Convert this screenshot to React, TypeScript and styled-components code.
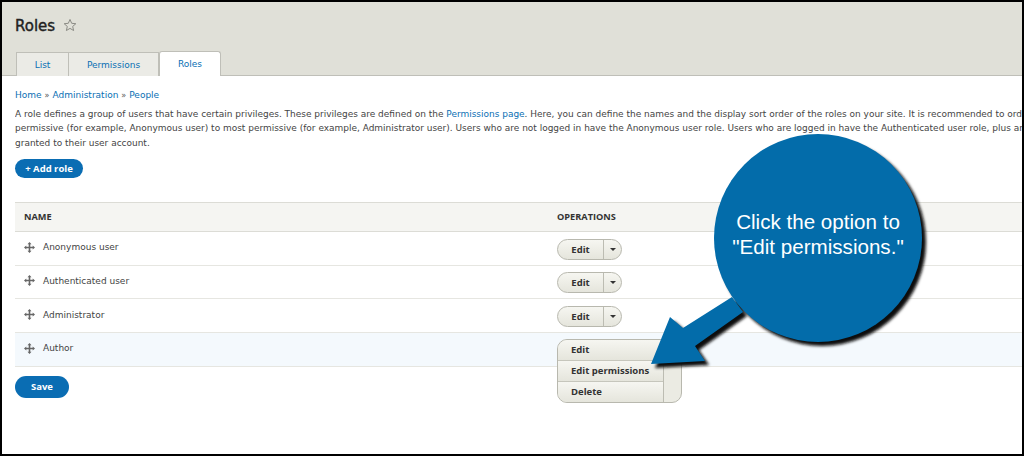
import React from "react";
import styled, { createGlobalStyle } from "styled-components";

const Global = createGlobalStyle`
  html, body { margin: 0; padding: 0; background: #fff; }
  body { font-family: "DejaVu Sans", sans-serif; }
  * { box-sizing: border-box; }
`;

const boldFont = `"Open Sans", "DejaVu Sans", sans-serif`;

const Frame = styled.div`
  position: relative;
  width: 1024px;
  height: 456px;
  overflow: hidden;
  background: #fff;
  border-style: solid;
  border-color: #000;
  border-width: 2px;
  color: #444;
`;

const Header = styled.header`
  height: 74px;
  background: #e0e0d8;
  border-bottom: 1px solid #bfbfb8;
  padding: 14px 0 0 13px;
  display: flex;
  flex-direction: column;
`;

const TitleRow = styled.div`
  display: flex;
  align-items: center;
  gap: 8px;
  height: 20px;
`;

const Title = styled.h1`
  margin: 0;
  font-size: 15px;
  line-height: 20px;
  font-weight: 400;
  color: #222;
  -webkit-text-stroke: 0.4px #222;
`;

const StarIcon = styled.svg`
  margin-top: -2px;
`;

const Tabs = styled.nav`
  display: flex;
  margin-top: 15px;
  margin-left: 1px;
  height: 25px;
`;

const Tab = styled.a<{ $active?: boolean; $first?: boolean; $width: number }>`
  display: flex;
  align-items: center;
  justify-content: center;
  width: ${(p) => p.$width}px;
  height: ${(p) => (p.$active ? 25 : 24)}px;
  margin-top: ${(p) => (p.$active ? 0 : 1)}px;
  font-size: 9px;
  color: #0a6fb4;
  background: ${(p) => (p.$active ? "#fff" : "#ebebe6")};
  border: 1px solid #bfbfb8;
  border-bottom: none;
  border-left-width: ${(p) => (p.$first || p.$active ? 1 : 0)}px;
  border-radius: ${(p) => (p.$active ? "3px 3px 0 0" : "0")};
`;

const Content = styled.main`
  padding: 13px 0 0 13px;
`;

const Crumbs = styled.div`
  font-size: 9px;
  line-height: 13px;
  color: #0a6fb4;
  & span { font-size: 8px; color: #555; margin: 0 3px; }
`;

const Intro = styled.div`
  margin-top: 5px;
  width: 1009px;
  overflow: hidden;
`;

const IntroLine = styled.p`
  margin: 0;
  font-size: 8.98px;
  line-height: 14.3px;
  white-space: nowrap;
  color: #444;
  & a { color: #0a6fb4; }
`;

const PrimaryButton = styled.button<{ $width: number; $height: number }>`
  display: block;
  width: ${(p) => p.$width}px;
  height: ${(p) => p.$height}px;
  border: none;
  border-radius: 12px;
  background: #0a6db3;
  color: #fff;
  font-family: ${boldFont};
  font-size: 9.5px;
  font-weight: 700;
  padding: 0;
`;

const AddWrap = styled.div`
  margin-top: 9px;
`;

const Table = styled.div`
  margin-top: 24px;
  width: 1009px;
`;

const HeadRow = styled.div`
  display: grid;
  grid-template-columns: 533px 1fr;
  align-items: center;
  height: 30px;
  background: #f5f5f2;
  border-top: 1px solid #dcdcd6;
  border-bottom: 1px solid #dcdcd6;
  padding-left: 9px;
  font-family: ${boldFont};
  font-size: 9.2px;
  font-weight: 700;
  color: #333;
`;

const Row = styled.div<{ $highlight?: boolean }>`
  position: relative;
  display: grid;
  grid-template-columns: 533px 1fr;
  align-items: center;
  height: 33.7px;
  padding-left: 9px;
  background: ${(p) => (p.$highlight ? "#f4f9fd" : "#fff")};
  border-bottom: 1px solid #e6e6e1;
`;

const NameCell = styled.div`
  display: flex;
  align-items: center;
  gap: 8px;
  font-size: 9px;
  color: #444;
  transform: translateY(-1px);
`;

const Operations = styled.div`
  display: flex;
  width: 65px;
  height: 21px;
  border: 1px solid #b8b8ae;
  border-radius: 11px;
  overflow: hidden;
  background: linear-gradient(#f6f6f1, #e5e5dc);
  transform: translateY(1px);
`;

const OpMain = styled.div`
  display: flex;
  align-items: center;
  justify-content: center;
  width: 46px;
  font-family: ${boldFont};
  font-size: 9.5px;
  font-weight: 700;
  color: #333;
  border-right: 1px solid #bcbcb2;
`;

const OpToggle = styled.div`
  flex: 1;
  display: flex;
  align-items: center;
  justify-content: center;
  &::after {
    content: "";
    border-style: solid;
    border-width: 3px 3.5px 0;
    border-color: #333 transparent transparent;
  }
`;

const Menu = styled.div`
  position: absolute;
  left: 542px;
  top: 6px;
  width: 125px;
  height: 64px;
  display: flex;
  border: 1px solid #b8b8ae;
  border-radius: 10px;
  overflow: hidden;
  background: #ebebe3;
  z-index: 2;
`;

const MenuList = styled.div`
  width: 106px;
  border-right: 1px solid #bcbcb2;
  display: flex;
  flex-direction: column;
`;

const MenuItem = styled.div`
  flex: 1;
  display: flex;
  align-items: center;
  padding-left: 13px;
  font-family: ${boldFont};
  font-size: 9.5px;
  font-weight: 700;
  color: #333;
  background: linear-gradient(#f6f6f1, #e5e5dc);
  & + & { border-top: 1px solid #c6c6bc; }
`;

const SaveWrap = styled.div`
  margin-top: 9px;
`;

const Callout = styled.svg`
  position: absolute;
  left: -2px;
  top: -2px;
  z-index: 5;
  pointer-events: none;
`;

const CalloutText = styled.div`
  position: absolute;
  left: 691px;
  top: 208px;
  width: 250px;
  text-align: center;
  z-index: 6;
  font-family: "Liberation Sans", Arial, sans-serif;
  font-size: 20.6px;
  line-height: 24.5px;
  color: #fff;
`;

const Star = () => (
  <StarIcon width="14" height="14" viewBox="0 0 24 24" fill="none" stroke="#8a8a84" strokeWidth="1.7">
    <path d="M12 2.500l2.900 6.600 7.100.7-5.400 4.700 1.600 7-6.200-3.700-6.200 3.700 1.600-7L2 9.800l7.100-.7z" />
  </StarIcon>
);

const Grip = () => (
  <svg width="11" height="11" viewBox="0 0 11 11" fill="#666">
    <path d="M5.500 0l2 2.300H6.300v2.400h2.400V3.500l2.300 2-2.300 2V6.300H6.300v2.400h1.200l-2 2.300-2-2.300h1.200V6.300H2.300v1.200L0 5.500l2.300-2v1.200h2.400V2.300H3.500z" />
  </svg>
);

const rows = ["Anonymous user", "Authenticated user", "Administrator"];
const arrow = "M732 297L683 328L670 317L651 364L705 361L695 346L743 312Z";

export default function App() {
  return (
    <Frame>
      <Global />
      <Header>
        <TitleRow>
          <Title>Roles</Title>
          <Star />
        </TitleRow>
        <Tabs>
          <Tab $first $width={53}>List</Tab>
          <Tab $width={90}>Permissions</Tab>
          <Tab $active $width={62}>Roles</Tab>
        </Tabs>
      </Header>
      <Content>
        <Crumbs>Home<span>»</span>Administration<span>»</span>People</Crumbs>
        <Intro>
          <IntroLine>
            A role defines a group of users that have certain privileges. These privileges are defined on the <a>Permissions page</a>. Here, you can define the names and the display sort order of the roles on your site. It is recommended to order roles from least
          </IntroLine>
          <IntroLine>
            permissive (for example, Anonymous user) to most permissive (for example, Administrator user). Users who are not logged in have the Anonymous user role. Users who are logged in have the Authenticated user role, plus any other permissions
          </IntroLine>
          <IntroLine>granted to their user account.</IntroLine>
        </Intro>
        <AddWrap>
          <PrimaryButton $width={68} $height={19}>+ Add role</PrimaryButton>
        </AddWrap>
        <Table>
          <HeadRow>
            <div>NAME</div>
            <div>OPERATIONS</div>
          </HeadRow>
          {rows.map((name) => (
            <Row key={name}>
              <NameCell><Grip />{name}</NameCell>
              <Operations>
                <OpMain>Edit</OpMain>
                <OpToggle />
              </Operations>
            </Row>
          ))}
          <Row $highlight>
            <NameCell><Grip />Author</NameCell>
            <div />
            <Menu>
              <MenuList>
                <MenuItem>Edit</MenuItem>
                <MenuItem>Edit permissions</MenuItem>
                <MenuItem>Delete</MenuItem>
              </MenuList>
            </Menu>
          </Row>
        </Table>
        <SaveWrap>
          <PrimaryButton $width={54} $height={22}>Save</PrimaryButton>
        </SaveWrap>
      </Content>
      <Callout width="1024" height="456" viewBox="0 0 1024 456">
        <defs>
          <filter id="soft" x="-20%" y="-20%" width="140%" height="140%">
            <feGaussianBlur stdDeviation="1.6" />
          </filter>
        </defs>
        <g transform="translate(4 4)" filter="url(#soft)" fill="#111">
          <circle cx="818" cy="238" r="104" />
          <path d={arrow} />
        </g>
        <circle cx="818" cy="238" r="104" fill="#036caa" />
        <path d={arrow} fill="#036caa" />
      </Callout>
      <CalloutText>Click the option to<br />"Edit permissions."</CalloutText>
    </Frame>
  );
}
